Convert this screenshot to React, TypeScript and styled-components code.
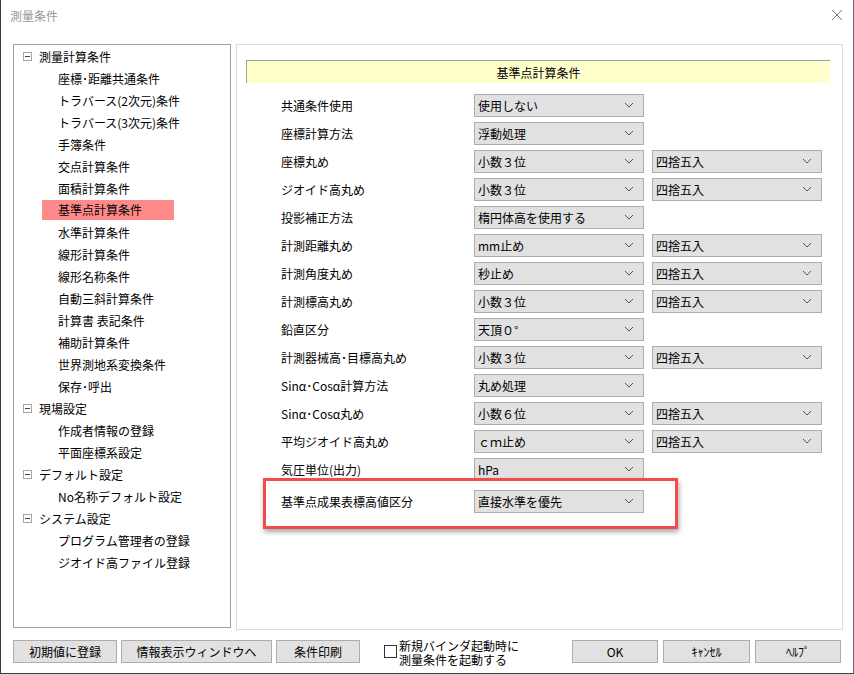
import * as React from "react";
import styled, { createGlobalStyle } from "styled-components";

const GlobalStyle = createGlobalStyle`
  *, *::before, *::after {
    box-sizing: border-box;
  }
  html, body {
    margin: 0;
    padding: 0;
    background: #d9d9d9;
  }
  body {
    font-family: "Noto Sans CJK JP", "Liberation Sans", sans-serif;
    font-size: 12px;
    color: #000;
  }
`;

const SWindow = styled.div`
  width: 854px;
  height: 674px;
  background: #fff;
  border-left: 1px solid #3c3c3c;
  border-right: 1px solid #6a6a6a;
  border-bottom: 1px solid #3c3c3c;
  display: flex;
  flex-direction: column;
`;

const STitleBar = styled.div`
  height: 30px;
  flex-shrink: 0;
  display: flex;
  align-items: center;
  justify-content: space-between;
  padding: 0 8px 0 9px;
  color: #9a9a9a;
  font-size: 12px;
`;

const SClose = styled.div`
  width: 16px;
  height: 16px;
  display: flex;
  align-items: center;
  justify-content: center;
`;

const SBody = styled.div`
  flex-shrink: 0;
  display: flex;
  gap: 5px;
  padding: 14px 0 0 12px;
`;

const STree = styled.div`
  width: 218px;
  height: 584px;
  border: 1px solid #a0a0a0;
  display: flex;
  flex-direction: column;
`;

const STreeItem = styled.div<{ $level: number }>`
  height: 22px;
  flex-shrink: 0;
  display: flex;
  align-items: center;
  padding-left: ${(p) => (p.$level === 0 ? 9 : 44)}px;
  white-space: nowrap;
`;

const SToggle = styled.div`
  width: 9px;
  height: 9px;
  border: 1px solid #a6a6a6;
  margin-right: 7px;
  display: flex;
  align-items: center;
  justify-content: center;
  &::after {
    content: "";
    width: 5px;
    height: 1px;
    background: #444;
  }
`;

const SSelected = styled.div`
  width: 132px;
  height: 20px;
  line-height: 20px;
  margin-left: -16px;
  padding-left: 16px;
  background: #ff8a8a;
`;

const SPanel = styled.div`
  width: 607px;
  height: 586px;
  border: 1px solid #dcdcdc;
  padding: 15px 0 0 9px;
  display: flex;
  flex-direction: column;
`;

const SHeader = styled.div`
  width: 584px;
  height: 23px;
  background: #ffffcc;
  border-top: 1px solid #a0a0a0;
  border-left: 1px solid #a0a0a0;
  display: flex;
  align-items: center;
  justify-content: center;
  margin-bottom: 8px;
`;

const SForm = styled.div`
  display: flex;
  flex-direction: column;
  padding-left: 35px;
`;

const SRow = styled.div<{ $last?: boolean }>`
  position: relative;
  height: 28px;
  margin-top: ${(p) => (p.$last ? 4 : 0)}px;
  display: flex;
  align-items: center;
`;

const SLabel = styled.div`
  width: 193px;
  white-space: nowrap;
`;

const SCombo = styled.div`
  width: 170px;
  height: 23px;
  border: 1px solid #adadad;
  background: #e1e1e1;
  display: flex;
  align-items: center;
  justify-content: space-between;
  padding: 0 9px 0 3px;
  margin-right: 8px;
  white-space: nowrap;
`;

const SMark = styled.div`
  position: absolute;
  left: -18px;
  top: -9px;
  width: 415px;
  height: 51px;
  border: 3px solid #f44a4a;
  box-shadow: 1px 3px 5px rgba(0, 0, 0, 0.35);
  pointer-events: none;
`;

const SFooter = styled.div`
  flex: 1;
  display: flex;
  align-items: flex-start;
  padding: 10px 12px 0 12px;
`;

const SButton = styled.div<{ $w: number }>`
  width: ${(p) => p.$w}px;
  height: 23px;
  flex-shrink: 0;
  border: 1px solid #adadad;
  background: #e1e1e1;
  display: flex;
  align-items: center;
  justify-content: center;
  margin-right: 4px;
  white-space: nowrap;
`;

const SCheckWrap = styled.div`
  display: flex;
  align-items: flex-start;
  margin-left: 20px;
  margin-top: -1px;
`;

const SCheckBox = styled.div`
  width: 13px;
  height: 13px;
  border: 1px solid #333;
  background: #fff;
  margin-right: 2px;
  margin-top: 6px;
`;

const SCheckText = styled.div`
  display: flex;
  flex-direction: column;
  white-space: nowrap;
`;

const SCheckLine = styled.div`
  height: 14px;
  line-height: 14px;
`;

const SRight = styled.div`
  margin-left: auto;
  display: flex;
  gap: 1px;
`;

const Chevron = () => (
  <svg width="10" height="6" viewBox="0 0 10 6">
    <path d="M1 1 L5 5 L9 1" fill="none" stroke="#555" strokeWidth="1" />
  </svg>
);

interface TreeNode {
  label: string;
  level: number;
  selected?: boolean;
}

const tree: TreeNode[] = [
  { label: "測量計算条件", level: 0 },
  { label: "座標･距離共通条件", level: 1 },
  { label: "トラバース(2次元)条件", level: 1 },
  { label: "トラバース(3次元)条件", level: 1 },
  { label: "手簿条件", level: 1 },
  { label: "交点計算条件", level: 1 },
  { label: "面積計算条件", level: 1 },
  { label: "基準点計算条件", level: 1, selected: true },
  { label: "水準計算条件", level: 1 },
  { label: "線形計算条件", level: 1 },
  { label: "線形名称条件", level: 1 },
  { label: "自動三斜計算条件", level: 1 },
  { label: "計算書 表記条件", level: 1 },
  { label: "補助計算条件", level: 1 },
  { label: "世界測地系変換条件", level: 1 },
  { label: "保存･呼出", level: 1 },
  { label: "現場設定", level: 0 },
  { label: "作成者情報の登録", level: 1 },
  { label: "平面座標系設定", level: 1 },
  { label: "デフォルト設定", level: 0 },
  { label: "No名称デフォルト設定", level: 1 },
  { label: "システム設定", level: 0 },
  { label: "プログラム管理者の登録", level: 1 },
  { label: "ジオイド高ファイル登録", level: 1 },
];

interface FormRow {
  label: string;
  value: string;
  round?: string;
}

const rows: FormRow[] = [
  { label: "共通条件使用", value: "使用しない" },
  { label: "座標計算方法", value: "浮動処理" },
  { label: "座標丸め", value: "小数３位", round: "四捨五入" },
  { label: "ジオイド高丸め", value: "小数３位", round: "四捨五入" },
  { label: "投影補正方法", value: "楕円体高を使用する" },
  { label: "計測距離丸め", value: "mm止め", round: "四捨五入" },
  { label: "計測角度丸め", value: "秒止め", round: "四捨五入" },
  { label: "計測標高丸め", value: "小数３位", round: "四捨五入" },
  { label: "鉛直区分", value: "天頂０°" },
  { label: "計測器械高･目標高丸め", value: "小数３位", round: "四捨五入" },
  { label: "Sinα･Cosα計算方法", value: "丸め処理" },
  { label: "Sinα･Cosα丸め", value: "小数６位", round: "四捨五入" },
  { label: "平均ジオイド高丸め", value: "ｃｍ止め", round: "四捨五入" },
  { label: "気圧単位(出力)", value: "hPa" },
];

const Combo = ({ value }: { value: string }) => (
  <SCombo>
    <span>{value}</span>
    <Chevron />
  </SCombo>
);

const App = () => {
  return (
    <>
      <GlobalStyle />
      <SWindow>
        <STitleBar>
          <span>測量条件</span>
          <SClose>
            <svg width="12" height="12" viewBox="0 0 12 12">
              <path d="M1 1 L11 11 M11 1 L1 11" stroke="#777" strokeWidth="1" />
            </svg>
          </SClose>
        </STitleBar>
        <SBody>
          <STree>
            {tree.map((n) => (
              <STreeItem key={n.label} $level={n.level}>
                {n.level === 0 && <SToggle />}
                {n.selected ? <SSelected>{n.label}</SSelected> : n.label}
              </STreeItem>
            ))}
          </STree>
          <SPanel>
            <SHeader>基準点計算条件</SHeader>
            <SForm>
              {rows.map((r) => (
                <SRow key={r.label}>
                  <SLabel>{r.label}</SLabel>
                  <Combo value={r.value} />
                  {r.round && <Combo value={r.round} />}
                </SRow>
              ))}
              <SRow $last>
                <SLabel>基準点成果表標高値区分</SLabel>
                <Combo value="直接水準を優先" />
                <SMark />
              </SRow>
            </SForm>
          </SPanel>
        </SBody>
        <SFooter>
          <SButton $w={104}>初期値に登録</SButton>
          <SButton $w={151}>情報表示ウィンドウへ</SButton>
          <SButton $w={84}>条件印刷</SButton>
          <SCheckWrap>
            <SCheckBox />
            <SCheckText>
              <SCheckLine>新規バインダ起動時に</SCheckLine>
              <SCheckLine>測量条件を起動する</SCheckLine>
            </SCheckText>
          </SCheckWrap>
          <SRight>
            <SButton $w={86}>OK</SButton>
            <SButton $w={87}>ｷｬﾝｾﾙ</SButton>
            <SButton $w={86} style={{ marginRight: 0 }}>
              ﾍﾙﾌﾟ
            </SButton>
          </SRight>
        </SFooter>
      </SWindow>
    </>
  );
};

export default App;
